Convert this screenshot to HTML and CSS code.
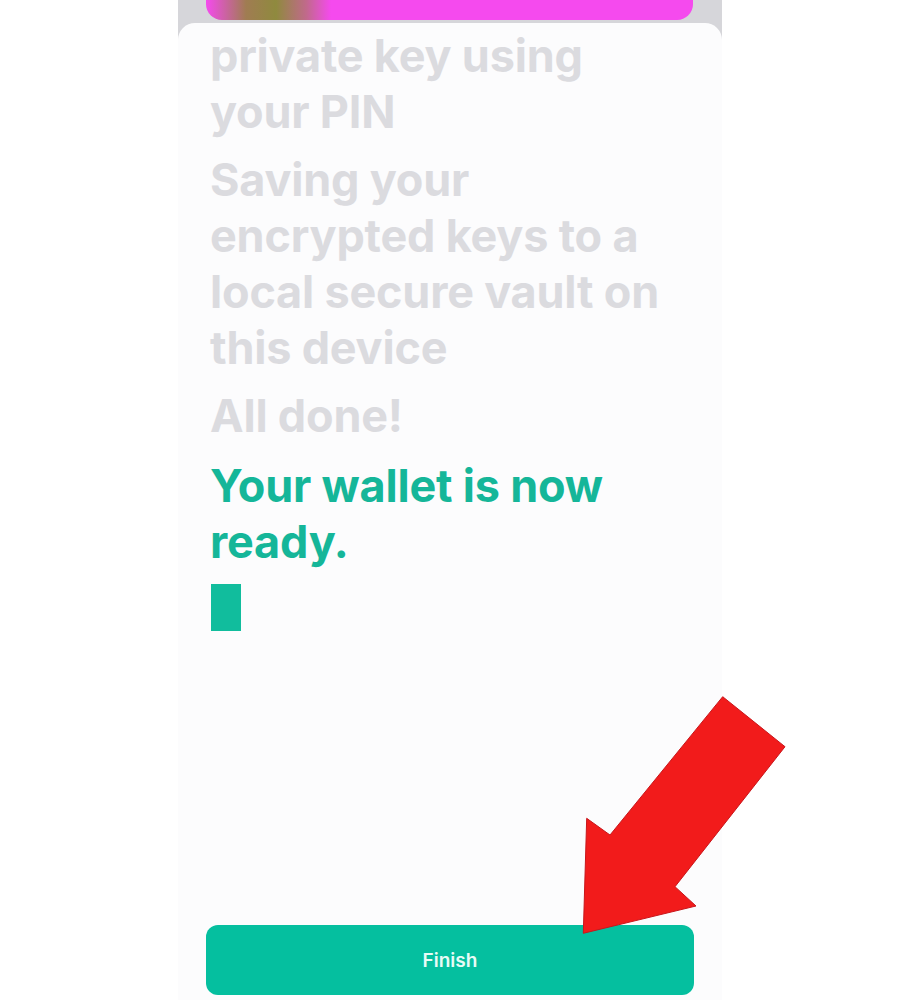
FILE: index.html
```html
<!DOCTYPE html>
<html lang="en">
<head>
    <meta charset="UTF-8">
    <meta name="viewport" content="width=device-width, initial-scale=1.0">
    <title>wallet setup</title>
    <link rel="stylesheet" href="styles.css">
</head>
<body>
    <div class="screen">
        <div class="hero"></div>
        <div class="sheet">
            <div class="log">
                <p class="step">private key using your PIN</p>
                <p class="step">Saving your encrypted keys to a local secure vault on this device</p>
                <p class="step">All done!</p>
                <p class="step done">Your wallet is now ready.</p>
                <span class="cursor"></span>
            </div>
            <button class="finish">Finish</button>
        </div>
    </div>
    <!-- red arrow pointing at the button -->
    <svg class="arrow" width="900" height="1000" viewBox="0 0 900 1000">
        <polygon points="722.7,696.7 785,746.7 675,886.7 696,906 583.3,933.3 586.7,818.3 610,835" fill="#f21b1b" stroke="#c8161b" stroke-width="1"/>
    </svg>
</body>
</html>
```

FILE: styles.css
```css
* , *::after , *::before{
    box-sizing: border-box;
    margin: 0;
    padding: 0;
}
body{
    margin: 0;
    background-color: #ffffff;
    position: relative;
    font-family: Inter, "Noto Sans", sans-serif;
}
.screen{
    width: 544px;
    height: 1000px;
    margin: 0 auto;
    background-color: #d6d6da;
    overflow: hidden;
    display: flex;
    flex-direction: column;
}
.hero{
    height: 20px;
    margin: 0 29px 0 28px;
    border-radius: 0 0 16px 16px;
    background:
        linear-gradient(90deg, rgba(246, 70, 236, 0) 0px, #a07c52 40px, #8f8a3e 70px, #c06a8a 100px, rgba(246, 70, 236, 0) 125px),
        #f54aee;
}
.sheet{
    flex: 1;
    margin-top: 3px;
    background-color: #fcfcfd;
    border-radius: 17px 17px 0 0;
    padding: 5px 28px 5px 28px;
    display: flex;
    flex-direction: column;
}
.log{
    padding-left: 4px;
    display: flex;
    flex-direction: column;
    gap: 12px;
}
.step{
    font-size: 45px;
    font-weight: 700;
    line-height: 56px;
    letter-spacing: -0.2px;
    color: #dbdbdf;
    width: 458px;
}
.done{
    color: #15b699;
    margin-top: 2px;
}
.cursor{
    display: block;
    width: 30px;
    height: 47px;
    margin-top: 2px;
    margin-left: 1px;
    background-color: #11bd9d;
}
.finish{
    margin-top: auto;
    width: 100%;
    height: 70px;
    border: none;
    border-radius: 12px;
    background-color: #05bf9f;
    color: #e8fbf6;
    font-family: Inter, "Noto Sans", sans-serif;
    font-size: 19px;
    font-weight: 600;
}
.arrow{
    position: absolute;
    left: 0;
    top: 0;
    pointer-events: none;
}
```
